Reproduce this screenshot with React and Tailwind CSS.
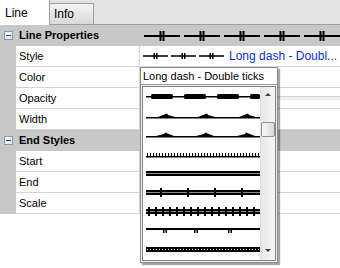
import React from 'react';

const font = { fontFamily: '"Liberation Sans", Arial, sans-serif' };

function DoubleTickDash({ width, dash, gap, start, y, stroke, tickH, tickW }) {
  const items = [];
  for (let x = start; x + dash <= width; x += dash + gap) {
    const c = x + dash / 2;
    items.push(
      <g key={x}>
        <rect x={x} y={y - stroke / 2} width={dash} height={stroke} fill="#000" />
        <rect x={c - tickW - 0.5} y={y - tickH / 2} width={tickW} height={tickH} fill="#000" />
        <rect x={c + 0.5} y={y - tickH / 2} width={tickW} height={tickH} fill="#000" />
      </g>
    );
  }
  return <>{items}</>;
}

function MinusBox() {
  return (
    <div className="w-[9px] h-[9px] border border-[#7f9db9] bg-gradient-to-br from-white to-[#d8dde6] flex items-center justify-center">
      <div className="w-[5px] h-px bg-[#2b4a7a]" />
    </div>
  );
}

function Category({ label, children }) {
  return (
    <div className="flex h-[21px] bg-[#c8c8c8] border-b border-[#c8c8c8]">
      <div className="w-[16px] flex items-center justify-center shrink-0">
        <MinusBox />
      </div>
      <div className="w-[124px] shrink-0 flex items-center pl-[3px] font-bold text-[11px] text-black">{label}</div>
      <div className="flex-1 relative">{children}</div>
    </div>
  );
}

function Prop({ label, children }) {
  return (
    <div className="flex h-[21px]">
      <div className="w-[16px] bg-[#c8c8c8] shrink-0" />
      <div className="w-[124px] shrink-0 flex items-center pl-[3px] text-[11px] text-black border-b border-r border-[#d4d4d4] bg-white">{label}</div>
      <div className="flex-1 flex items-center border-b border-[#d4d4d4] bg-white">{children}</div>
    </div>
  );
}

function Sample({ kind }) {
  const W = 114;
  const els = [];
  if (kind === 1) {
    els.push(<rect key="l" x="0" y="8" width={W} height="1.5" fill="#000" />);
    for (let x = 5; x < W; x += 33) {
      els.push(<rect key={x} x={x} y="6" width={Math.min(22, W - x)} height="5" rx="1.5" fill="#000" />);
    }
  } else if (kind === 2 || kind === 3) {
    els.push(<rect key="l" x="0" y="10" width={W} height="1.5" fill="#000" />);
    [12, 52, 93].forEach((x) => {
      const pts =
        kind === 2
          ? `${x},10 ${x + 9},6.5 ${x + 10},8 ${x + 17},10`
          : `${x - 2},10 ${x + 6},8 ${x + 7},6.5 ${x + 16},10`;
      els.push(<polygon key={x} points={pts} fill="#000" />);
    });
  } else if (kind === 4) {
    els.push(<rect key="l" x="0" y="11" width={W} height="1.5" fill="#000" />);
    for (let x = 1; x < W; x += 3) {
      els.push(<rect key={x} x={x} y="8" width="1" height="4" fill="#000" />);
    }
  } else if (kind >= 5 && kind <= 7) {
    els.push(<rect key="a" x="0" y="7" width={W} height="2" fill="#000" />);
    els.push(<rect key="m" x="0" y="9" width={W} height="1" fill="#8a8a8a" />);
    els.push(<rect key="b" x="0" y="10" width={W} height="2" fill="#000" />);
    if (kind === 6) {
      [14, 41, 68, 95].forEach((x) =>
        els.push(<rect key={x} x={x} y="5" width="2" height="9" fill="#000" />)
      );
    }
    if (kind === 7) {
      for (let x = 2; x < W; x += 7) {
        els.push(<rect key={x} x={x} y="5" width="2" height="9" fill="#000" />);
      }
    }
  } else if (kind === 8) {
    els.push(<rect key="l" x="0" y="7" width={W} height="2" fill="#000" />);
    [17, 48, 82].forEach((x) => {
      els.push(<rect key={x} x={x} y="9" width="1.5" height="3" fill="#000" />);
      els.push(<rect key={x + 'b'} x={x + 2.5} y="9" width="1.5" height="3" fill="#000" />);
    });
  } else if (kind === 9) {
    els.push(<rect key="l" x="0" y="7" width={W} height="5" fill="#000" />);
    for (let x = 1; x < W; x += 3) {
      els.push(<rect key={x} x={x} y="9" width="1" height="1" fill="#fff" />);
    }
  }
  return (
    <svg width={W} height="19" className="block">
      {els}
    </svg>
  );
}

export default function App() {
  return (
    <div className="w-[340px] h-[268px] bg-white relative overflow-hidden" style={font}>
      {/* tabs */}
      <div className="h-[25px] bg-[#e3e3e3] border-b border-[#a0a0a0] flex items-end">
        <div className="w-[50px] h-[25px] -mb-px bg-white border-r border-[#a0a0a0] flex items-center pl-[5px] text-[12px] text-black">
          Line
        </div>
        <div className="w-[44px] h-[21px] bg-gradient-to-b from-[#f4f4f4] to-[#d9d9d9] border-r border-t border-[#a0a0a0] flex items-center pl-[4px] text-[12px] text-black">
          Info
        </div>
      </div>

      {/* property grid */}
      <Category label="Line Properties">
        <svg width="200" height="20" className="block">
          <DoubleTickDash width={200} dash={36} gap={4} start={4} y={11} stroke={2} tickH={10} tickW={2} />
        </svg>
      </Category>
      <Prop label="Style">
        <svg width="86" height="20" className="block shrink-0">
          <DoubleTickDash width={86} dash={25} gap={3} start={3} y={10} stroke={1.5} tickH={6} tickW={1.5} />
        </svg>
        <span className="ml-[3px] text-[12px] text-[#0a2fd8] whitespace-nowrap">Long dash - Doubl...</span>
      </Prop>
      <Prop label="Color" />
      <Prop label="Opacity">
        <div className="w-full h-full relative">
          <div className="absolute left-0 right-0 top-[8px] h-px bg-[#d4d4d4]" />
          <div className="absolute left-0 right-0 top-[9px] h-[3px] bg-[#eeeeee]" />
        </div>
      </Prop>
      <Prop label="Width" />
      <Category label="End Styles" />
      <Prop label="Start" />
      <Prop label="End" />
      <Prop label="Scale" />

      {/* dropdown */}
      <div className="absolute left-[140px] top-[67px] w-[140px] h-[198px] flex flex-col">
        <div className="flex-1 flex flex-col bg-[#f0f0f0] border border-[#8c8c8c] shadow-[2px_2px_1px_rgba(0,0,0,0.35)] mr-[2px] mb-[2px]">
          <div className="h-[17px] bg-white border-b border-[#a0a0a0] flex items-center pl-[2px] text-[11px] text-black whitespace-nowrap">
            Long dash - Double ticks
          </div>
          <div className="flex-1 m-[1px] border border-[#828282] bg-white flex">
            <div className="flex-1 flex flex-col pt-[1px] pl-[3px] gap-0">
              {[1, 2, 3, 4, 5, 6, 7, 8, 9].map((k) => (
                <Sample key={k} kind={k} />
              ))}
            </div>
            <div className="w-[16px] bg-gradient-to-r from-[#e8e8e8] to-[#f6f6f6] border-l border-[#e0e0e0] flex flex-col items-center pt-[6px] pb-[8px]">
              <div className="w-0 h-0 border-l-[3px] border-r-[3px] border-b-[3px] border-l-transparent border-r-transparent border-b-[#404040]" />
              <div className="mt-[26px] w-[14px] h-[15px] rounded-[2px] border border-[#909090] bg-gradient-to-r from-[#fafafa] to-[#d8d8d8]" />
              <div className="flex-1" />
              <div className="w-0 h-0 border-l-[3px] border-r-[3px] border-t-[3px] border-l-transparent border-r-transparent border-t-[#404040]" />
            </div>
          </div>
        </div>
      </div>
    </div>
  );
}
